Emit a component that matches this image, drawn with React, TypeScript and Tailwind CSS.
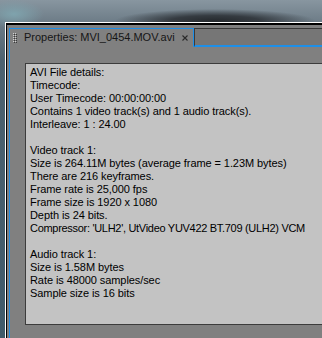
import React from "react";

const lines1 = [
  "AVI File details:",
  "Timecode:",
  "User Timecode: 00:00:00:00",
  "Contains 1 video track(s) and 1 audio track(s).",
  "Interleave: 1 : 24.00",
];
const lines2 = [
  "Video track 1:",
  "Size is 264.11M bytes (average frame = 1.23M bytes)",
  "There are 216 keyframes.",
  "Frame rate is 25,000 fps",
  "Frame size is 1920 x 1080",
  "Depth is 24 bits.",
];
const lines3 = [
  "Audio track 1:",
  "Size is 1.58M bytes",
  "Rate is 48000 samples/sec",
  "Sample size is 16 bits",
];

function Block({ lines }: { lines: string[] }) {
  return (
    <>
      {lines.map((l, i) => (
        <div key={i} className="h-[13px] leading-[13px] whitespace-nowrap">
          {l}
        </div>
      ))}
    </>
  );
}

export default function App() {
  return (
    <div className="w-[322px] h-[338px] overflow-hidden bg-[#55656f] bg-[radial-gradient(ellipse_100px_12px_at_215px_21px,#25292d_0%,#353b41_45%,transparent_100%),radial-gradient(ellipse_30px_14px_at_14px_14px,#7fa3ad_0%,transparent_100%),linear-gradient(180deg,#8896a0_0px,#6d7c87_22px,#4d6270_60px,#3f5a6a_338px)] font-['Liberation_Sans',Arial,sans-serif] text-[11px]">
      <div className="ml-[5px] mt-[22px] h-[316px] border-l border-t border-white">
        <div className="h-full border-l border-t-2 border-black bg-[#7f7f7f] pl-[2px] pt-[3px]">
          <div className="h-full border-l border-[#1e8fe8] flex flex-col">
            <div className="flex h-[19px] shrink-0">
              <div className="w-[184px] border-t border-r border-[#1e8fe8] bg-[#808080] flex items-center">
                <svg width="4" height="10" className="ml-[3px]" viewBox="0 0 4 10">
                  {[0, 2, 4, 6, 8].map((y) => (
                    <React.Fragment key={y}>
                      <rect x="0" y={y} width="1" height="1" fill="#d0d0d0" />
                      <rect x="2" y={y} width="1" height="1" fill="#d0d0d0" />
                      <rect x="1" y={y + 1} width="1" height="1" fill="#3a3a3a" />
                      <rect x="3" y={y + 1} width="1" height="1" fill="#3a3a3a" />
                    </React.Fragment>
                  ))}
                </svg>
                <span className="ml-[7px] text-[#161616] whitespace-nowrap leading-[13px] -mt-[1px]">
                  Properties: MVI_0454.MOV.avi
                </span>
                <svg width="6" height="6" viewBox="0 0 6 6" className="ml-[7px]">
                  <path d="M0.5 0.5L5.5 5.5M5.5 0.5L0.5 5.5" stroke="#2a2a2a" strokeWidth="1.1" />
                </svg>
              </div>
              <div className="flex-1 border-t border-l border-[#3a3a3a] border-b-2 border-b-[#1e8fe8] bg-[#767676]" />
            </div>
            <div className="flex-1 pl-[15px] pt-[16px] bg-[#808080]">
              <div className="h-[262px] border-t border-l border-b border-[#3c3c3c] bg-[#c3c3c3] pl-[4px] pt-[2px] text-black tracking-[-0.08px]">
                <Block lines={lines1} />
                <div className="h-[13px]" />
                <Block lines={lines2} />
                <div className="h-[13px] leading-[13px] whitespace-nowrap tracking-[-0.3px]">
                  Compressor: 'ULH2', UtVideo YUV422 BT.709 (ULH2) VCM
                </div>
                <div className="h-[13px]" />
                <Block lines={lines3} />
              </div>
            </div>
          </div>
        </div>
      </div>
    </div>
  );
}
